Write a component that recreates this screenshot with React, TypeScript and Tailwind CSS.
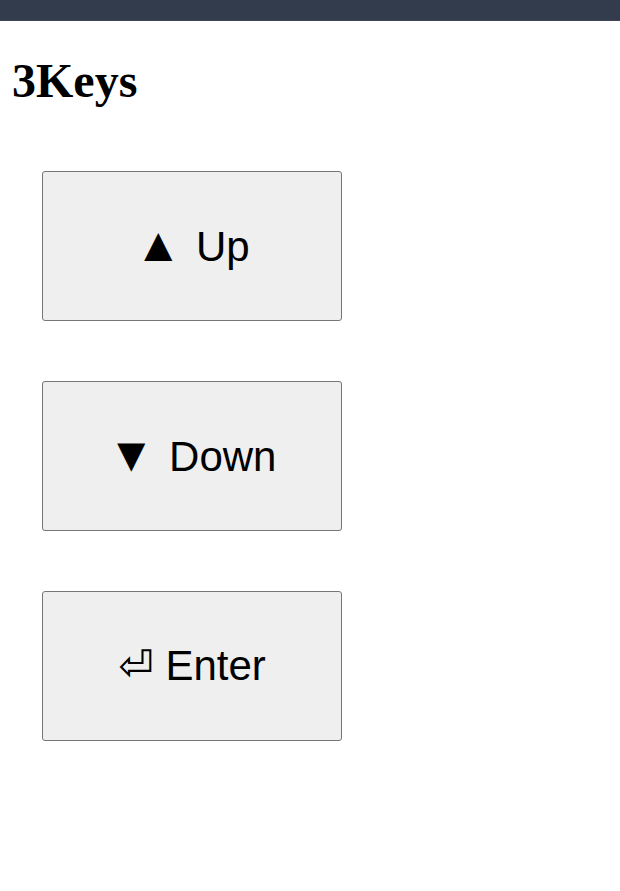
const keys = [
  { glyph: "▲", label: "Up", glyphClass: "text-[48px] mr-[14px]" },
  { glyph: "▼", label: "Down", glyphClass: "text-[48px] mr-[14px]" },
  { glyph: "⏎", label: "Enter", glyphClass: "[font-family:'DejaVu_Sans',sans-serif] mr-[12px]" },
];

export default function App() {
  return (
    <div className="min-h-[891px] bg-white">
      <div className="h-[21px] bg-[#333c4d] border-b border-[#414756]" />
      <div className="px-[12px]">
        <h1 className="mt-[32px] text-[48px] leading-[55px] font-bold text-black [font-family:'Liberation_Serif',serif]">
          3Keys
        </h1>
        <div className="mt-[63px] ml-[30px] flex flex-col gap-[60px]">
          {keys.map((k) => (
            <button
              key={k.label}
              className="w-[300px] h-[150px] flex items-center justify-center rounded-[3px] border border-[#767676] bg-[#efefef] text-[42px] leading-[48px] text-black [font-family:'Liberation_Sans',Arial,sans-serif]"
            >
              <span>
                <span className={k.glyphClass}>{k.glyph}</span>
                {k.label}
              </span>
            </button>
          ))}
        </div>
      </div>
    </div>
  );
}
